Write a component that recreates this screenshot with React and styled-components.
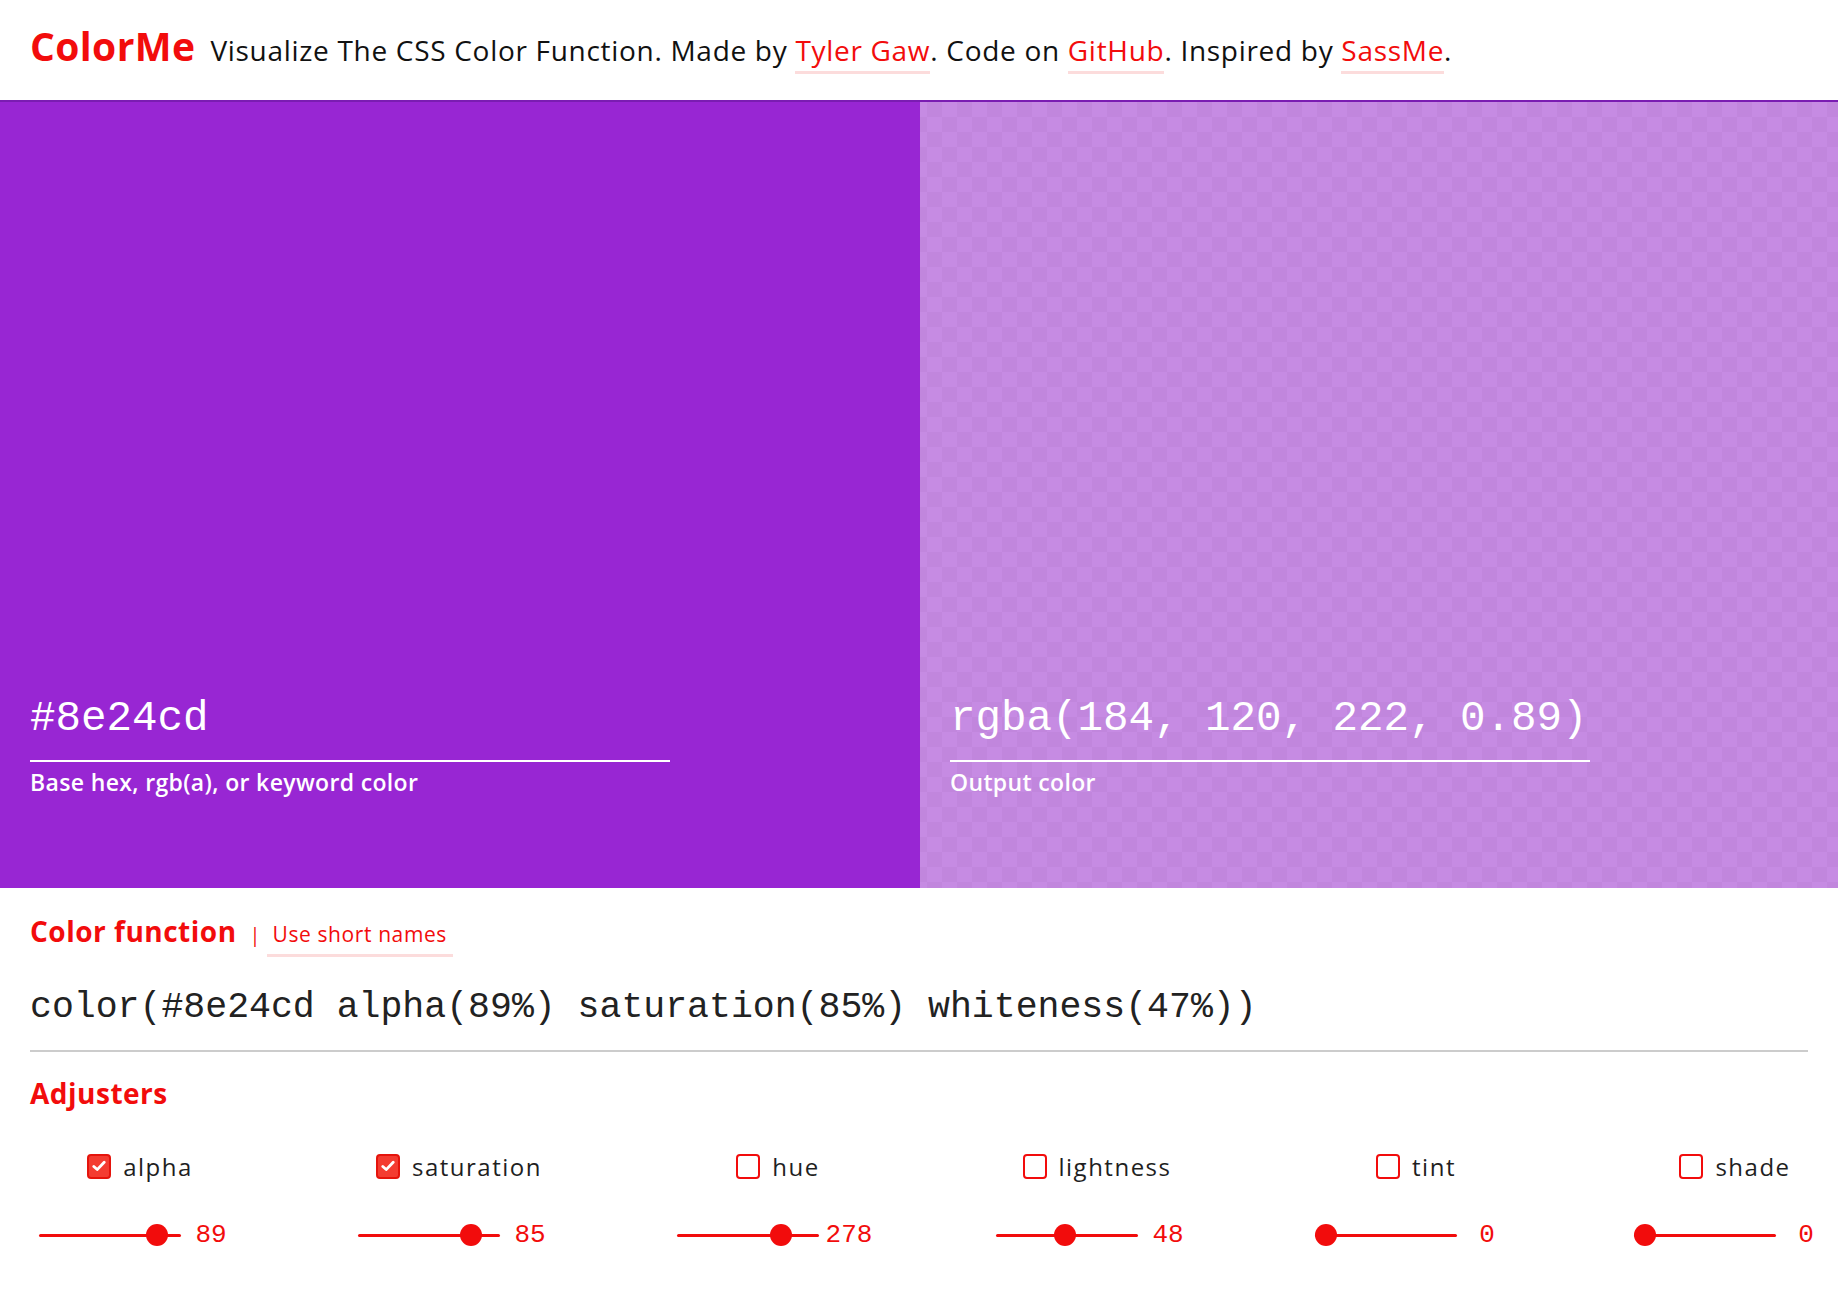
import React from "react";
import styled, { createGlobalStyle, css } from "styled-components";

const Red = "#f20c0c";
const Ink = "#1f1f1f";
const Sans = `"Open Sans", "Roboto", "Liberation Sans", sans-serif`;
const Mono = `"Liberation Mono", "DejaVu Sans Mono", monospace`;

const GlobalStyle = createGlobalStyle`
  html, body {
    margin: 0;
    padding: 0;
    background: #ffffff;
    font-family: ${Sans};
    color: ${Ink};
  }
  * { box-sizing: border-box; }
`;

const Page = styled.div`
  width: 100%;
  min-height: 100vh;
  overflow: hidden;
`;

const Header = styled.header`
  display: flex;
  align-items: baseline;
  gap: 15px;
  height: 100px;
  padding: 19px 30px 0;
`;

const Logo = styled.h1`
  margin: 0;
  font-size: 39px;
  font-weight: 700;
  color: ${Red};
  letter-spacing: 0.4px;
`;

const Tagline = styled.p`
  margin: 0;
  font-size: 28px;
  letter-spacing: 0.7px;
  color: #111;
`;

const Link = styled.a`
  color: ${Red};
  text-decoration: none;
  padding-bottom: 2px;
  border-bottom: 3px solid #fcdcdc;
  ${({ $small }) =>
    $small &&
    css`
      font-size: 21px;
      letter-spacing: 0.6px;
      padding: 0 6px 6px;
    `}
`;

const Swatches = styled.section`
  display: grid;
  grid-template-columns: 920px 1fr;
  height: 788px;
  border-top: 2px solid #7a1cb2;
`;

const checker = css`
  background-color: #c68be3;
  background-image: repeating-conic-gradient(#c186dd 0 25%, #c68be3 0 50%);
  background-size: 30px 30px;
  background-position: -8px 0;
`;

const Swatch = styled.div`
  display: flex;
  flex-direction: column;
  justify-content: flex-end;
  padding: 0 30px 93px;
  background: ${({ $color }) => $color || "transparent"};
  ${({ $checkered }) => $checkered && checker}
`;

const ColorValue = styled.div`
  width: 640px;
  padding-bottom: 14px;
  border-bottom: 2px solid #ffffff;
  font-family: ${Mono};
  font-size: 42.5px;
  line-height: 54px;
  color: #ffffff;
  white-space: nowrap;
`;

const FieldLabel = styled.div`
  margin-top: 7px;
  font-size: 23px;
  line-height: 26px;
  letter-spacing: 0.35px;
  font-weight: 600;
  color: #ffffff;
`;

const Controls = styled.section`
  padding: 26px 30px 0;
`;

const SectionHead = styled.div`
  display: flex;
  align-items: baseline;
`;

const Heading = styled.h2`
  margin: 0;
  font-size: 28px;
  line-height: 34px;
  font-weight: 700;
  letter-spacing: 0.5px;
  color: ${Red};
  ${({ $spaced }) => $spaced && "margin-top: 24px;"}
`;

const Divider = styled.span`
  margin: 0 6px 0 13px;
  font-size: 20px;
  color: ${Red};
`;

const FunctionOutput = styled.div`
  margin-top: 29px;
  padding-bottom: 20px;
  border-bottom: 2px solid #cccccc;
  font-family: ${Mono};
  font-size: 36.5px;
  line-height: 44px;
  color: #222;
  white-space: nowrap;
`;

const AdjusterGrid = styled.div`
  display: grid;
  grid-template-columns: repeat(6, 202px);
  column-gap: 117px;
  margin: 41px 0 0 9px;
`;

const Adjuster = styled.div`
  display: flex;
  flex-direction: column;
  align-items: center;
  gap: 39px;
`;

const Toggle = styled.label`
  display: flex;
  align-items: center;
  gap: 12px;
  height: 30px;
  font-size: 24px;
  letter-spacing: 1.5px;
  color: ${Ink};
  white-space: nowrap;
`;

const Box = styled.span`
  display: flex;
  align-items: center;
  justify-content: center;
  flex-shrink: 0;
  width: 24px;
  height: 25px;
  border-radius: 4px;
  border: 2px solid ${({ $on }) => ($on ? "#e5140c" : Red)};
  background: ${({ $on }) => ($on ? "#f43c31" : "#ffffff")};
`;

const SliderRow = styled.div`
  display: flex;
  align-items: center;
  width: 202px;
  height: 30px;
`;

const Range = styled.input`
  -webkit-appearance: none;
  appearance: none;
  width: 142px;
  height: 24px;
  margin: 0;
  background: transparent;

  &::-webkit-slider-runnable-track {
    height: 3px;
    border-radius: 2px;
    background: ${Red};
  }

  &::-webkit-slider-thumb {
    -webkit-appearance: none;
    width: 22px;
    height: 22px;
    margin-top: -9.5px;
    border: none;
    border-radius: 50%;
    background: ${Red};
  }

  &::-moz-range-track {
    height: 3px;
    background: ${Red};
  }

  &::-moz-range-thumb {
    width: 22px;
    height: 22px;
    border: none;
    border-radius: 50%;
    background: ${Red};
  }
`;

const Amount = styled.output`
  flex: 1;
  text-align: center;
  font-family: ${Mono};
  font-size: 26px;
  color: ${Red};
`;

const adjusters = [
  { name: "alpha", on: true, value: 89, max: 100 },
  { name: "saturation", on: true, value: 85, max: 100 },
  { name: "hue", on: false, value: 278, max: 360 },
  { name: "lightness", on: false, value: 48, max: 100 },
  { name: "tint", on: false, value: 0, max: 100 },
  { name: "shade", on: false, value: 0, max: 100 },
];

const Check = () => (
  <svg width="14" height="12" viewBox="0 0 14 12">
    <path
      d="M1.8 6.4 L5.2 9.6 L12.2 2.2"
      fill="none"
      stroke="#ffffff"
      strokeWidth="2.8"
      strokeLinecap="round"
      strokeLinejoin="round"
    />
  </svg>
);

export default function App() {
  return (
    <Page>
      <GlobalStyle />
      <Header>
        <Logo>ColorMe</Logo>
        <Tagline>
          Visualize The CSS Color Function. Made by <Link href="#">Tyler Gaw</Link>. Code on{" "}
          <Link href="#">GitHub</Link>. Inspired by <Link href="#">SassMe</Link>.
        </Tagline>
      </Header>

      <Swatches>
        <Swatch $color="#9826d3">
          <ColorValue>#8e24cd</ColorValue>
          <FieldLabel>Base hex, rgb(a), or keyword color</FieldLabel>
        </Swatch>
        <Swatch $checkered>
          <ColorValue>rgba(184, 120, 222, 0.89)</ColorValue>
          <FieldLabel>Output color</FieldLabel>
        </Swatch>
      </Swatches>

      <Controls>
        <SectionHead>
          <Heading>Color function</Heading>
          <Divider>|</Divider>
          <Link href="#" $small>
            Use short names
          </Link>
        </SectionHead>
        <FunctionOutput>color(#8e24cd alpha(89%) saturation(85%) whiteness(47%))</FunctionOutput>

        <Heading $spaced>Adjusters</Heading>
        <AdjusterGrid>
          {adjusters.map((a) => (
            <Adjuster key={a.name}>
              <Toggle>
                <Box $on={a.on}>{a.on && <Check />}</Box>
                {a.name}
              </Toggle>
              <SliderRow>
                <Range type="range" min="0" max={a.max} defaultValue={a.value} />
                <Amount>{a.value}</Amount>
              </SliderRow>
            </Adjuster>
          ))}
        </AdjusterGrid>
      </Controls>
    </Page>
  );
}
